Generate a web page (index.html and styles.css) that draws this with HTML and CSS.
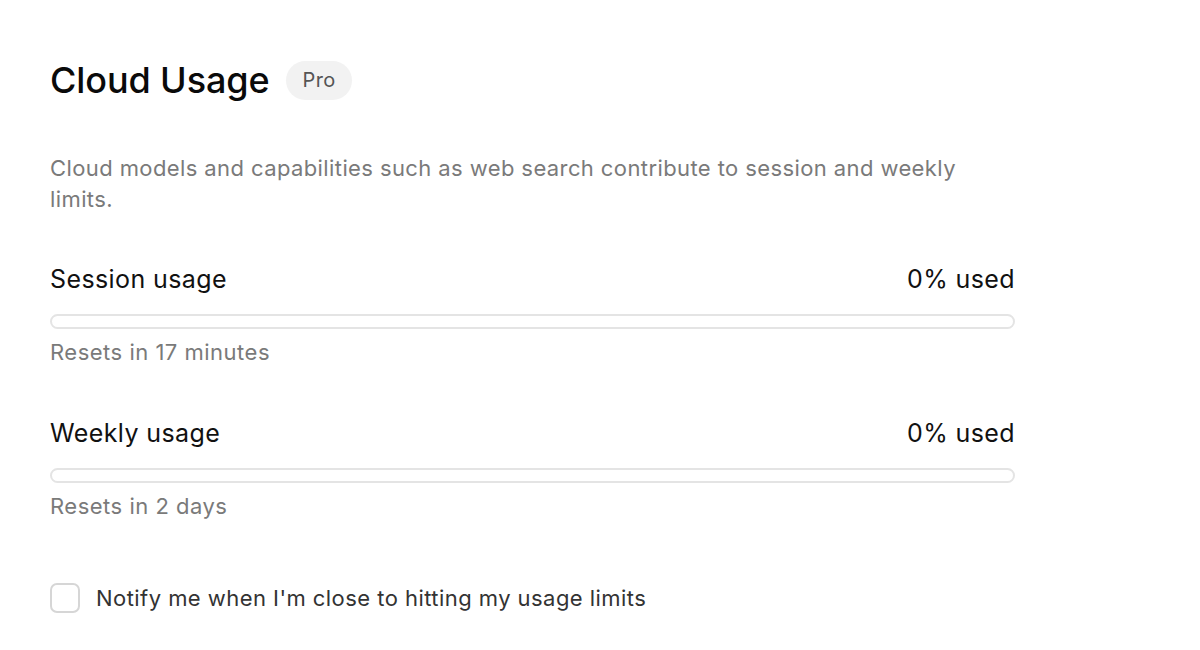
FILE: index.html
```html
<!DOCTYPE html>
<html lang="en">
<head>
<meta charset="utf-8">
<title>Cloud Usage</title>
<link rel="stylesheet" href="styles.css">
</head>
<body>
<main class="panel">
  <header class="title-row">
    <h1 class="title">Cloud Usage</h1>
    <span class="badge">Pro</span>
  </header>
  <p class="desc">Cloud models and capabilities such as web search contribute to session and weekly limits.</p>

  <section class="usage">
    <div class="usage-head">
      <span class="usage-label">Session usage</span>
      <span class="usage-value">0% used</span>
    </div>
    <div class="bar"><div class="bar-fill" style="width:0%"></div></div>
    <div class="usage-reset">Resets in 17 minutes</div>
  </section>

  <section class="usage">
    <div class="usage-head">
      <span class="usage-label">Weekly usage</span>
      <span class="usage-value">0% used</span>
    </div>
    <div class="bar"><div class="bar-fill" style="width:0%"></div></div>
    <div class="usage-reset">Resets in 2 days</div>
  </section>

  <label class="notify">
    <span class="checkbox"></span>
    <span class="notify-text">Notify me when I'm close to hitting my usage limits</span>
  </label>
</main>
</body>
</html>
```

FILE: styles.css
```css
* { box-sizing: border-box; }
html, body {
  margin: 0;
  padding: 0;
  background: #ffffff;
  font-family: Inter, "Open Sans", "Liberation Sans", sans-serif;
  color: #111;
}
.panel {
  width: 965px;
  margin-left: 50px;
  padding-top: 60px;
}
.title-row {
  display: flex;
  align-items: center;
  gap: 16px;
  height: 40px;
}
.title {
  margin: 0;
  font-size: 36px;
  font-weight: 500;
  letter-spacing: -0.1px;
  color: #0a0a0a;
}
.badge {
  display: inline-flex;
  align-items: center;
  justify-content: center;
  height: 39px;
  padding: 0 17px;
  border-radius: 20px;
  background: #f2f2f2;
  color: #555;
  font-size: 20px;
  letter-spacing: 0.3px;
}
.desc {
  margin: 53px 0 0;
  font-size: 22px;
  line-height: 31px;
  letter-spacing: 0.4px;
  color: #7a7a7a;
  max-width: 935px;
}
.usage {
  margin-top: 48px;
}
.usage + .usage {
  margin-top: 51px;
}
.usage-head {
  display: flex;
  justify-content: space-between;
  align-items: center;
  font-size: 25px;
  line-height: 32px;
  letter-spacing: 0.4px;
  color: #111;
}
.bar {
  margin-top: 19px;
  height: 15px;
  border: 2px solid #e4e4e4;
  border-radius: 8px;
  overflow: hidden;
}
.bar-fill {
  height: 100%;
  background: #111;
}
.usage-reset {
  margin-top: 9px;
  font-size: 22px;
  line-height: 28px;
  letter-spacing: 0.5px;
  color: #7a7a7a;
}
.notify {
  display: flex;
  align-items: center;
  gap: 16px;
  margin-top: 63px;
}
.checkbox {
  width: 30px;
  height: 30px;
  border: 2px solid #d6d6d6;
  border-radius: 7px;
  background: #fff;
}
.notify-text {
  font-size: 22px;
  letter-spacing: 0.45px;
  color: #333;
}
```
